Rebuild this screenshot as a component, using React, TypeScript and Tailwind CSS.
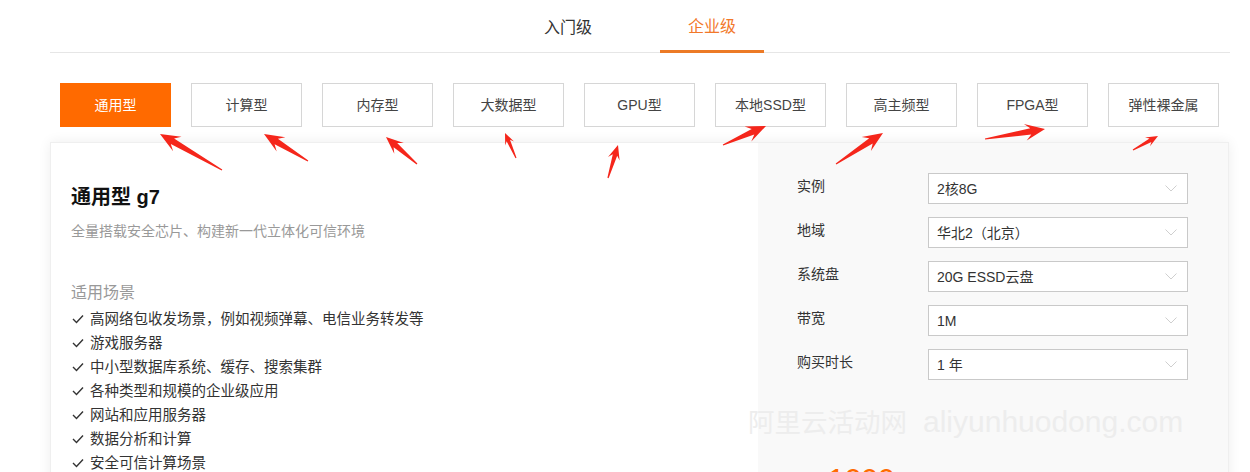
import React from "react";

const types = ["通用型", "计算型", "内存型", "大数据型", "GPU型", "本地SSD型", "高主频型", "FPGA型", "弹性裸金属"];
const scenes = [
  "高网络包收发场景，例如视频弹幕、电信业务转发等",
  "游戏服务器",
  "中小型数据库系统、缓存、搜索集群",
  "各种类型和规模的企业级应用",
  "网站和应用服务器",
  "数据分析和计算",
  "安全可信计算场景",
];
const fields: [string, string][] = [
  ["实例", "2核8G"],
  ["地域", "华北2（北京）"],
  ["系统盘", "20G ESSD云盘"],
  ["带宽", "1M"],
  ["购买时长", "1 年"],
];

// [tipX, tipY, tailX, tailY]
const arrows: [number, number, number, number][] = [
  [160, 134, 222, 170],
  [264, 134, 308, 161],
  [386, 137, 417, 164],
  [505, 133, 516, 158],
  [618, 145, 608, 178],
  [766, 126, 723, 145],
  [883, 133, 836, 164],
  [1045, 129, 985, 139],
  [1158, 136, 1133, 150],
];

function arrowPoints(tx: number, ty: number, sx: number, sy: number) {
  const dx = tx - sx;
  const dy = ty - sy;
  const L = Math.hypot(dx, dy);
  const ux = dx / L;
  const uy = dy / L;
  const nx = -uy;
  const ny = ux;
  const hl = Math.min(20, L * 0.42);
  const hw = hl * 0.42;
  const nw = hl * 0.16;
  const neckX = tx - ux * hl * 0.72;
  const neckY = ty - uy * hl * 0.72;
  const barbX = tx - ux * hl;
  const barbY = ty - uy * hl;
  const pts = [
    [sx + nx * 0.6, sy + ny * 0.6],
    [neckX + nx * nw, neckY + ny * nw],
    [barbX + nx * hw, barbY + ny * hw],
    [tx, ty],
    [barbX - nx * hw, barbY - ny * hw],
    [neckX - nx * nw, neckY - ny * nw],
    [sx - nx * 0.6, sy - ny * 0.6],
  ];
  return pts.map((p) => `${p[0].toFixed(1)},${p[1].toFixed(1)}`).join(" ");
}

export default function App() {
  return (
    <div
      className="relative w-[1250px] h-[472px] overflow-hidden bg-white text-[#333]"
      style={{ fontFamily: '"Liberation Sans", "Noto Sans CJK SC", sans-serif' }}
    >
      <div className="mx-[50px] w-[1180px]">
        {/* header tabs */}
        <div className="flex justify-center gap-10 border-b border-[#e6e6e6] h-[53px]">
          <div className="w-[104px] h-[53px] flex items-center justify-center pt-[3px] text-[16px] leading-[20px] text-[#333]">
            入门级
          </div>
          <div className="w-[104px] h-[53px] -mb-px flex items-center justify-center pt-[3px] border-b-[3px] border-[#ec7a26] text-[16px] leading-[20px] text-[#f2782a]">
            企业级
          </div>
        </div>

        {/* type buttons */}
        <div className="flex gap-5 px-[10px] mt-[30px]">
          {types.map((t, i) => (
            <div
              key={t}
              className={
                i === 0
                  ? "w-[111px] h-[44px] flex items-center justify-center bg-[#ff6a00] text-white text-[14px] leading-[20px]"
                  : "w-[111px] h-[44px] flex items-center justify-center border border-[#d6d6d6] text-[#444] text-[14px] leading-[20px]"
              }
            >
              {t}
            </div>
          ))}
        </div>

        {/* panel */}
        <div className="mt-[15px] w-[1179px] h-[360px] flex border border-[#efefef] shadow-[0_0_12px_rgba(0,0,0,0.07)] bg-white">
          <div className="flex-1 pl-[20px] pt-[40px]">
            <div className="text-[20px] leading-[28px] font-bold text-[#111]">通用型 g7</div>
            <div className="mt-[10px] text-[14px] leading-[20px] text-[#999]">全量搭载安全芯片、构建新一代立体化可信环境</div>
            <div className="mt-[40px] text-[16px] leading-[24px] text-[#999]">适用场景</div>
            <div className="mt-[2px] flex flex-col">
              {scenes.map((s) => (
                <div key={s} className="flex items-center h-[24px] text-[14.5px] leading-[24px] text-[#333]">
                  <svg width="12" height="10" viewBox="0 0 12 10" className="ml-[1px] mr-[6px]">
                    <polyline points="1,5 4.5,8.5 11,1.5" fill="none" stroke="#333" strokeWidth="1.4" />
                  </svg>
                  {s}
                </div>
              ))}
            </div>
          </div>
          <div className="w-[470px] bg-[#f9f9f9] pl-[39px] pt-[30px]">
            {fields.map(([label, value]) => (
              <div key={label} className="flex h-[31px] mb-[13px]">
                <div className="w-[131px] pt-[3px] text-[14px] leading-[20px] text-[#333]">{label}</div>
                <div className="w-[260px] h-[31px] border border-[#c9c9c9] bg-white flex items-center justify-between pl-[8px] pr-[10px]">
                  <span className="text-[14px] leading-[20px] text-[#333]">{value}</span>
                  <svg width="12" height="7" viewBox="0 0 12 7">
                    <polyline points="0.5,0.5 6,6 11.5,0.5" fill="none" stroke="#cfcfcf" strokeWidth="1" />
                  </svg>
                </div>
              </div>
            ))}
            <div className="mt-[24px] -ml-[49px] flex items-baseline gap-[16px] leading-[36px] text-[#ededed] whitespace-nowrap">
              <span className="text-[26.5px]">阿里云活动网</span>
              <span className="text-[30px]">aliyunhuodong.com</span>
            </div>
            <div className="mt-[20px] ml-[31px] text-[30px] leading-[36px] text-[#ff6a00]">1000</div>
          </div>
        </div>
      </div>

      {/* red annotation arrows */}
      <svg className="absolute left-0 top-0 pointer-events-none" width="1250" height="472">
        {arrows.map((a, i) => (
          <polygon key={i} points={arrowPoints(a[0], a[1], a[2], a[3])} fill="#f5261b" />
        ))}
      </svg>
    </div>
  );
}
